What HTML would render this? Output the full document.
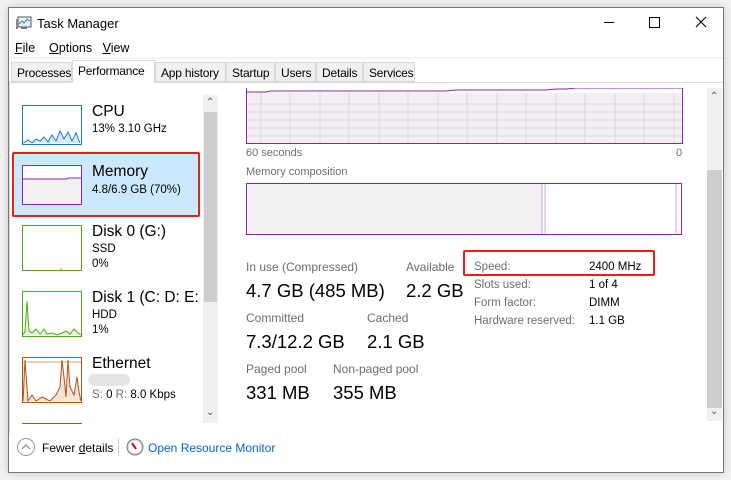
<!DOCTYPE html>
<html><head><style>
*{margin:0;padding:0;box-sizing:border-box}
body{width:731px;height:480px;background:#f3f3f3;font-family:"Liberation Sans",sans-serif;position:relative;overflow:hidden;color:#000}
.a{position:absolute;white-space:nowrap}
.win{position:absolute;left:8px;top:7px;width:716px;height:466px;background:#fff;border:1px solid #777;box-shadow:0 0 8px rgba(0,0,0,.2)}
.tab{position:absolute;top:62px;height:20px;background:#f0f0f0;border:1px solid #d9d9d9;font-size:12px;padding:3px 0 0 5px;white-space:nowrap;overflow:hidden;letter-spacing:-0.2px}
.g{color:#6d6d6d}
.big{font-size:18.5px}
</style></head><body>
<div class="win"></div>
<svg class="a" style="left:16px;top:15px" width="16" height="16" viewBox="0 0 16 16"><rect x="2" y="2" width="13" height="10" fill="#e8f2fb" stroke="#555"/><polyline points="3,9 6,6 8,8 11,4 14,6" fill="none" stroke="#2a7dc8"/><rect x="5" y="12" width="6" height="2" fill="#777"/><rect x="0" y="4" width="2" height="10" fill="#888"/></svg>
<div class="a" style="left:37px;top:16px;font-size:13px">Task Manager</div>
<div class="a" style="left:604px;top:22px;width:10px;height:1px;background:#000"></div>
<div class="a" style="left:649px;top:17px;width:11px;height:11px;border:1px solid #000"></div>
<svg class="a" style="left:695px;top:16px" width="12" height="12"><path d="M1 1L11 11M11 1L1 11" stroke="#000" stroke-width="1.1"/></svg>
<div class="a" style="left:15px;top:41px;font-size:12.5px"><u>F</u>ile&nbsp;&nbsp;&nbsp; <u>O</u>ptions&nbsp;&nbsp; <u>V</u>iew</div>
<div class="a" style="left:9px;top:57px;width:714px;height:2px;background:#f3f3f3"></div>
<div class="a" style="left:9px;top:82px;width:714px;height:1px;background:#d9d9d9"></div>
<div class="tab" style="left:11px;width:61px">Processes</div>
<div class="tab" style="left:72px;top:60px;height:23px;width:83px;background:#fff;border-bottom:none;padding-top:3px">Performance</div>
<div class="tab" style="left:155px;width:71px">App history</div>
<div class="tab" style="left:226px;width:49px">Startup</div>
<div class="tab" style="left:275px;width:41px">Users</div>
<div class="tab" style="left:316px;width:47px">Details</div>
<div class="tab" style="left:363px;width:52px">Services</div>
<div class="a" style="left:9px;top:83px;width:1px;height:350px;background:#d9d9d9"></div>
<div class="a" style="left:203px;top:95px;width:15px;height:328px;background:#f0f0f0"></div>
<div class="a" style="left:204px;top:112px;width:13px;height:190px;background:#cdcdcd"></div>
<div class="a" style="left:206px;top:97px;font-size:10px;color:#555">&#8963;</div>
<div class="a" style="left:206px;top:407px;font-size:10px;color:#555">&#8964;</div>
<svg class="a" style="left:22px;top:105px" width="60" height="40"><rect x=".5" y=".5" width="59" height="39" fill="#fff" stroke="#1a7dc4"/><polyline points="1,38 6,35 10,38 14,34 18,36 22,32 26,37 30,30 34,36 38,26 42,34 46,27 50,36 54,28 58,38" fill="#d7eaf7" stroke="#1a7dc4"/></svg>
<div class="a" style="left:92px;top:103px;font-size:15.5px">CPU</div>
<div class="a" style="left:92px;top:123px;font-size:11.5px">13% 3.10 GHz</div>
<div class="a" style="left:12px;top:152px;width:188px;height:65px;background:#cce8ff;border:2.5px solid #e8201a;border-radius:2px"></div>
<svg class="a" style="left:22px;top:165px" width="60" height="40"><rect x=".5" y=".5" width="59" height="39" fill="#f3f0f4" stroke="#8b22b0"/><rect x="1" y="1" width="58" height="13" fill="#fff"/><polyline points="1,14 45,14 46,13 59,13" fill="none" stroke="#8b22b0"/></svg>
<div class="a" style="left:92px;top:163px;font-size:15.5px">Memory</div>
<div class="a" style="left:92px;top:184px;font-size:11.5px">4.8/6.9 GB (70%)</div>
<svg class="a" style="left:22px;top:225px" width="60" height="46"><rect x=".5" y=".5" width="59" height="45" fill="#fff" stroke="#4da81a"/><path d="M39 45v-2" stroke="#4da81a"/></svg>
<div class="a" style="left:92px;top:223px;font-size:15.5px">Disk 0 (G:)</div>
<div class="a" style="left:92px;top:243px;font-size:11.5px">SSD</div>
<div class="a" style="left:92px;top:258px;font-size:11.5px">0%</div>
<svg class="a" style="left:22px;top:291px" width="60" height="46"><rect x=".5" y=".5" width="59" height="45" fill="#fff" stroke="#4da81a"/><polyline points="1,44 3,40 5,10 7,40 10,42 14,38 18,43 22,38 25,43 30,42 35,44 40,42 44,40 48,43 52,38 56,42 59,44" fill="#e3f2d9" stroke="#4da81a"/></svg>
<div class="a" style="left:92px;top:289px;font-size:15.5px;width:110px;overflow:hidden">Disk 1 (C: D: E: F</div>
<div class="a" style="left:92px;top:309px;font-size:11.5px">HDD</div>
<div class="a" style="left:92px;top:324px;font-size:11.5px">1%</div>
<svg class="a" style="left:22px;top:357px" width="60" height="46"><rect x=".5" y=".5" width="59" height="45" fill="#fff" stroke="#a9571a"/><path d="M1 5h58" stroke="#d9a07a"/><polyline points="1,44 3,3 6,44 10,38 14,44 20,40 28,44 34,38 38,30 40,3 42,20 44,40 46,3 48,30 52,38 55,20 57,35 59,44" fill="#f4e3d6" stroke="#a9571a"/></svg>
<div class="a" style="left:92px;top:355px;font-size:15.5px">Ethernet</div>
<div class="a" style="left:88px;top:374px;width:42px;height:12px;background:#e4e4e4;border-radius:6px"></div>
<div class="a" style="left:92px;top:389px;font-size:11.5px"><span class="g">S:</span> 0 <span class="g">R:</span> 8.0 Kbps</div>
<div class="a" style="left:22px;top:423px;width:60px;height:1px;background:#a9571a"></div>
<svg class="a" style="left:246px;top:88px" width="437" height="56"><rect x=".5" y="-1" width="436" height="56.5" fill="#f3f0f4" stroke="#8b22b0"/>
<g stroke="#e5cfe9"><path d="M15 0v55M44 0v55M74 0v55M103 0v55M133 0v55M162 0v55M192 0v55M221 0v55M251 0v55M280 0v55M310 0v55M339 0v55M369 0v55M398 0v55M428 0v55M1 16h435M1 24h435M1 32h435M1 40h435M1 48h435"/></g>
<rect x="1" y="0" width="435" height="5" fill="#fff"/>
<polyline points="1,4 20,4 25,3 200,3 210,2 300,2 310,1 320,1 330,0 436,0" fill="none" stroke="#8b22b0"/></svg>
<div class="a g" style="left:246px;top:147px;font-size:11px">60 seconds</div>
<div class="a g" style="left:676px;top:147px;font-size:11px">0</div>
<div class="a g" style="left:246px;top:166px;font-size:11px">Memory composition</div>
<svg class="a" style="left:246px;top:183px" width="437" height="53"><rect x=".5" y=".5" width="435" height="51" fill="#fff" stroke="#8b22b0"/><rect x="1" y="1" width="296" height="50" fill="#f3f0f4"/><path d="M296 1v50M299 1v50M430 1v50" stroke="#cfa8d8"/></svg>
<div class="a g" style="left:246px;top:260px;font-size:12px">In use (Compressed)</div>
<div class="a big" style="left:246px;top:280px">4.7 GB (485 MB)</div>
<div class="a g" style="left:406px;top:260px;font-size:12px">Available</div>
<div class="a big" style="left:406px;top:280px">2.2 GB</div>
<div class="a g" style="left:246px;top:311px;font-size:12px">Committed</div>
<div class="a big" style="left:246px;top:331px">7.3/12.2 GB</div>
<div class="a g" style="left:367px;top:311px;font-size:12px">Cached</div>
<div class="a big" style="left:367px;top:331px">2.1 GB</div>
<div class="a g" style="left:246px;top:362px;font-size:12px">Paged pool</div>
<div class="a big" style="left:246px;top:382px">331 MB</div>
<div class="a g" style="left:333px;top:362px;font-size:12px">Non-paged pool</div>
<div class="a big" style="left:333px;top:382px">355 MB</div>
<div class="a" style="left:463px;top:250px;width:192px;height:26px;border:2.5px solid #e8201a;border-radius:2px"></div>
<div class="a g" style="left:474px;top:258px;font-size:11.5px;line-height:18px">Speed:<br>Slots used:<br>Form factor:<br>Hardware reserved:</div>
<div class="a" style="left:589px;top:258px;font-size:11.5px;line-height:18px">2400 MHz<br>1 of 4<br>DIMM<br>1.1 GB</div>
<div class="a" style="left:707px;top:88px;width:15px;height:333px;background:#f0f0f0"></div>
<div class="a" style="left:707px;top:170px;width:15px;height:238px;background:#cdcdcd"></div>
<div class="a" style="left:710px;top:91px;font-size:10px;color:#555">&#8963;</div>
<div class="a" style="left:710px;top:406px;font-size:10px;color:#555">&#8964;</div>
<svg class="a" style="left:16px;top:437px" width="20" height="20"><circle cx="10" cy="10" r="8.5" fill="#fff" stroke="#999"/><path d="M6 12l4-4 4 4" fill="none" stroke="#888" stroke-width="1.2"/></svg>
<div class="a" style="left:42px;top:441px;font-size:12px">Fewer <u>d</u>etails</div>
<div class="a" style="left:118px;top:438px;width:1px;height:18px;background:#ccc"></div>
<svg class="a" style="left:126px;top:438px" width="18" height="18"><circle cx="9" cy="9" r="8" fill="#ddd" stroke="#777"/><circle cx="9" cy="9" r="6" fill="#fff"/><path d="M6 5l4 6" stroke="#c00" stroke-width="2"/></svg>
<div class="a" style="left:148px;top:441px;font-size:12px;color:#0066cc">Open Resource Monitor</div>
</body></html>
